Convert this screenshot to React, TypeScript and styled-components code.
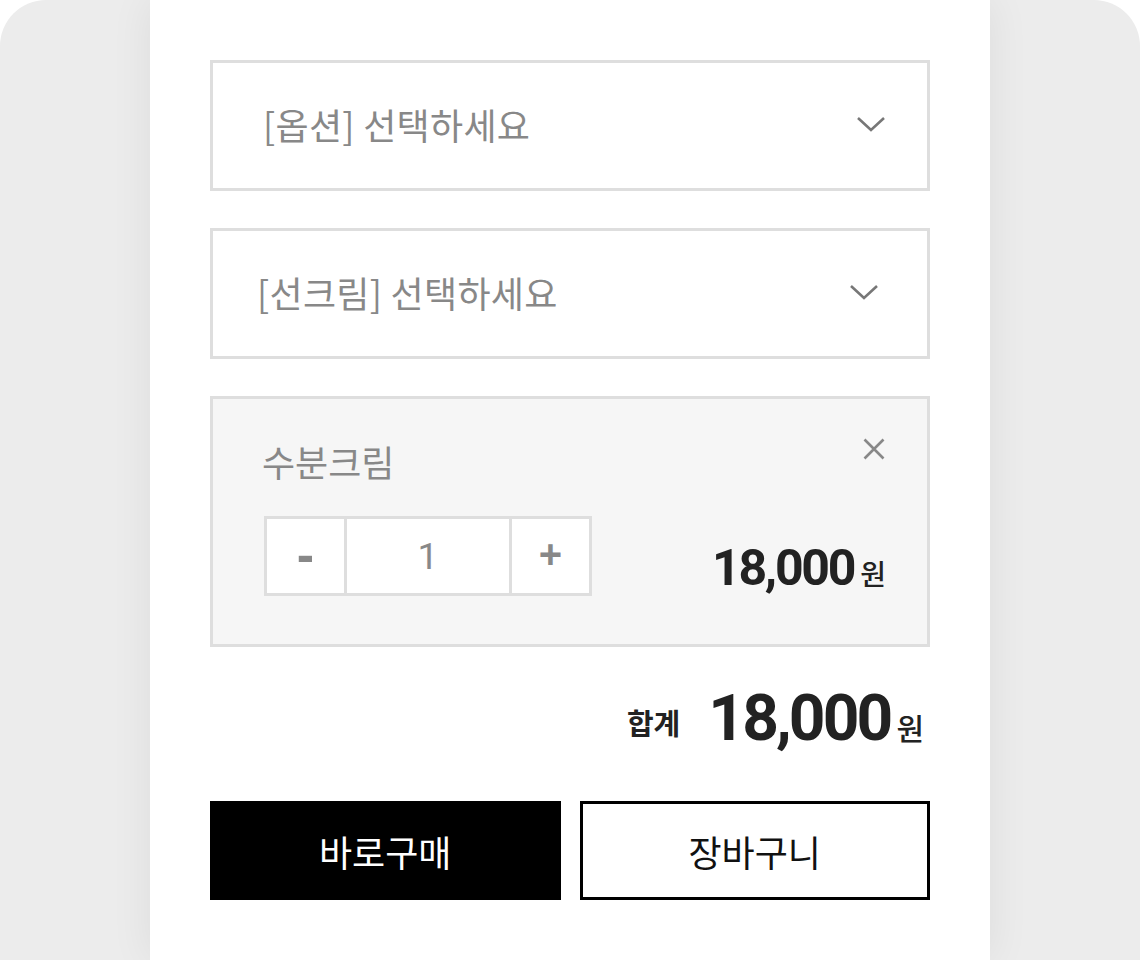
import React, { useState } from 'react'
import styled, { createGlobalStyle } from 'styled-components'

const GlobalStyle = createGlobalStyle`
	html, body {
		margin: 0;
		padding: 0;
		background: #fff;
	}
	body {
		font-family: Roboto, 'Noto Sans CJK KR', sans-serif;
	}
	* {
		box-sizing: border-box;
	}
`

const Backdrop = styled.div`
	width: 1140px;
	height: 960px;
	overflow: hidden;
	background: #ececec;
	border-radius: 46px 46px 0 0;
	padding: 0 150px;
`

const Panel = styled.div`
	height: 100%;
	background: #fff;
	box-shadow: 0 0 40px rgba(0, 0, 0, 0.07);
	padding: 60px 60px 0;
	display: flex;
	flex-direction: column;
`

const Select = styled.div<{ $left: number; $right: number }>`
	height: 131px;
	border: 3px solid #dedede;
	display: flex;
	align-items: center;
	justify-content: space-between;
	padding: 0 ${p => p.$right}px 4px ${p => p.$left}px;
	margin-bottom: 37px;
	cursor: pointer;
`

const SelectLabel = styled.span`
	font-family: 'Noto Sans CJK KR', sans-serif;
	font-size: 36px;
	color: #888;
	letter-spacing: 0.3px;
`

const ItemBox = styled.div`
	border: 3px solid #dedede;
	background: #f6f6f6;
	padding: 37px 41px 48px 49px;
`

const NameRow = styled.div`
	height: 50px;
	display: flex;
	justify-content: space-between;
	align-items: center;
`

const ItemName = styled.span`
	font-family: 'Noto Sans CJK KR', sans-serif;
	font-size: 36px;
	color: #888;
`

const CloseButton = styled.button`
	align-self: flex-start;
	margin-top: 1px;
	width: 24px;
	height: 24px;
	padding: 0;
	border: none;
	background: none;
	cursor: pointer;
	display: flex;
	align-items: center;
	justify-content: center;
`

const QtyRow = styled.div`
	margin-top: 30px;
	padding-left: 2px;
	display: flex;
	justify-content: space-between;
	align-items: flex-end;
`

const Stepper = styled.div`
	display: flex;
	height: 80px;
	border: 3px solid #dedede;
	background: #fff;
`

const StepButton = styled.button<{ $size: number }>`
	width: 77px;
	border: none;
	background: none;
	font-family: 'Liberation Sans', Arial, sans-serif;
	font-size: ${p => p.$size}px;
	font-weight: 700;
	color: #888;
	padding: 0 0 4px;
	cursor: pointer;
	display: flex;
	align-items: center;
	justify-content: center;
`

const QtyValue = styled.div`
	width: 168px;
	border-left: 3px solid #dedede;
	border-right: 3px solid #dedede;
	display: flex;
	align-items: center;
	justify-content: center;
	font-family: Roboto, sans-serif;
	font-size: 37px;
	color: #888;
`

const Price = styled.div<{ $size: number }>`
	display: flex;
	align-items: baseline;
	color: #222;
	font-family: Roboto, 'Noto Sans CJK KR', sans-serif;
	font-weight: 700;
	font-size: ${p => p.$size}px;
	letter-spacing: -0.045em;
	line-height: 1;
`

const Won = styled.span<{ $size: number }>`
	font-family: 'Noto Sans CJK KR', sans-serif;
	font-size: ${p => p.$size}px;
	font-weight: 500;
	letter-spacing: 0;
	margin-left: 6px;
`

const ItemPrice = styled(Price)`
	margin-bottom: 3px;
`

const TotalRow = styled.div`
	height: 154px;
	display: flex;
	justify-content: flex-end;
	align-items: center;
	padding: 0 6px 10px 0;
	gap: 28px;
`

const TotalLabel = styled.span`
	font-family: 'Noto Sans CJK KR', sans-serif;
	font-size: 29px;
	font-weight: 700;
	color: #222;
	margin-top: 6px;
`

const ButtonRow = styled.div`
	display: grid;
	grid-template-columns: 1fr 1fr;
	gap: 19px;
`

const ActionButton = styled.button<{ $primary?: boolean }>`
	height: 99px;
	border: 3px solid #000;
	background: ${p => (p.$primary ? '#000' : '#fff')};
	color: ${p => (p.$primary ? '#fff' : '#111')};
	font-family: 'Noto Sans CJK KR', sans-serif;
	font-size: 36px;
	font-weight: 400;
	cursor: pointer;
`

const Chevron = () => (
	<svg width='30' height='18' viewBox='0 0 30 18' fill='none'>
		<path d='M2 3 L15 15 L28 3' stroke='#777' strokeWidth='2.6' />
	</svg>
)

const CloseIcon = () => (
	<svg width='22' height='22' viewBox='0 0 22 22' fill='none'>
		<path d='M1.5 1.5 L20.5 20.5 M20.5 1.5 L1.5 20.5' stroke='#888' strokeWidth='2.6' />
	</svg>
)

const App = () => {
	const [qty, setQty] = useState(1)
	const unit = 18000
	const fmt = (n: number) => n.toLocaleString('ko-KR')

	return (
		<>
			<GlobalStyle />
			<Backdrop>
				<Panel>
					<Select $left={50} $right={41}>
						<SelectLabel>[옵션] 선택하세요</SelectLabel>
						<Chevron />
					</Select>
					<Select $left={44} $right={48}>
						<SelectLabel>[선크림] 선택하세요</SelectLabel>
						<Chevron />
					</Select>
					<ItemBox>
						<NameRow>
							<ItemName>수분크림</ItemName>
							<CloseButton aria-label='삭제'>
								<CloseIcon />
							</CloseButton>
						</NameRow>
						<QtyRow>
							<Stepper>
								<StepButton $size={52} onClick={() => setQty(q => Math.max(1, q - 1))}>
									-
								</StepButton>
								<QtyValue>{qty}</QtyValue>
								<StepButton $size={40} onClick={() => setQty(q => q + 1)}>
									+
								</StepButton>
							</Stepper>
							<ItemPrice $size={50}>
								{fmt(unit * qty)}
								<Won $size={28}>원</Won>
							</ItemPrice>
						</QtyRow>
					</ItemBox>
					<TotalRow>
						<TotalLabel>합계</TotalLabel>
						<Price $size={64}>
							{fmt(unit * qty)}
							<Won $size={30}>원</Won>
						</Price>
					</TotalRow>
					<ButtonRow>
						<ActionButton $primary>바로구매</ActionButton>
						<ActionButton>장바구니</ActionButton>
					</ButtonRow>
				</Panel>
			</Backdrop>
		</>
	)
}

export default App
